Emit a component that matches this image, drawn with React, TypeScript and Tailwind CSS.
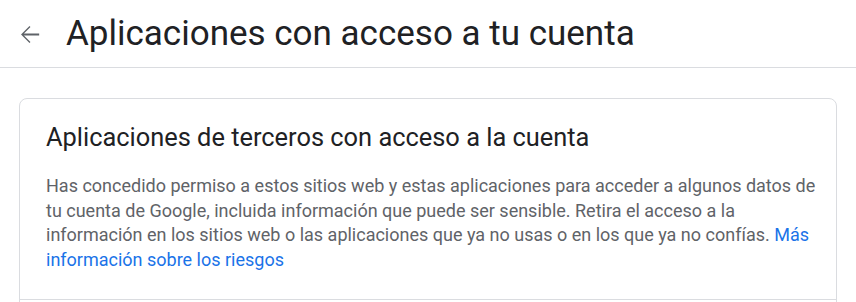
import React from "react";

export default function App() {
  return (
    <div className="w-[856px] h-[302px] overflow-hidden bg-white" style={{ fontFamily: "Roboto, 'Liberation Sans', sans-serif" }}>
      <div className="h-[68px] border-b border-[#dadce0] flex items-center">
        <div className="w-[66px] flex items-center pl-[15px] pt-[2px]">
          <svg width="29" height="29" viewBox="0 0 24 24" fill="#5f6368">
            <path d="M20 11.2H7.4l5.4-5.4L12 5l-7 7 7 7 .8-.8-5.4-5.4H20v-1.6z" />
          </svg>
        </div>
        <h1 className="text-[35px] leading-[40px] text-[#202124] font-normal">Aplicaciones con acceso a tu cuenta</h1>
      </div>
      <div className="pt-[30px] px-[19px]">
        <div className="border border-[#dadce0] rounded-lg">
          <div className="pl-[26px] pr-[12px] pt-[22px] pb-[27px]">
            <h2 className="text-[25.4px] leading-[32px] text-[#202124] font-normal">Aplicaciones de terceros con acceso a la cuenta</h2>
            <p className="mt-[21px] text-[18px] leading-[24.6px] text-[#5f6368]">
              Has concedido permiso a estos sitios web y estas aplicaciones para acceder a algunos datos de tu cuenta de Google, incluida información que puede ser sensible. Retira el acceso a la información en los sitios web o las aplicaciones que ya no usas o en los que ya no confías. <a className="text-[#1a73e8]">Más información sobre los riesgos</a>
            </p>
          </div>
          <div className="border-t border-[#dadce0] h-[20px]"></div>
        </div>
      </div>
    </div>
  );
}
